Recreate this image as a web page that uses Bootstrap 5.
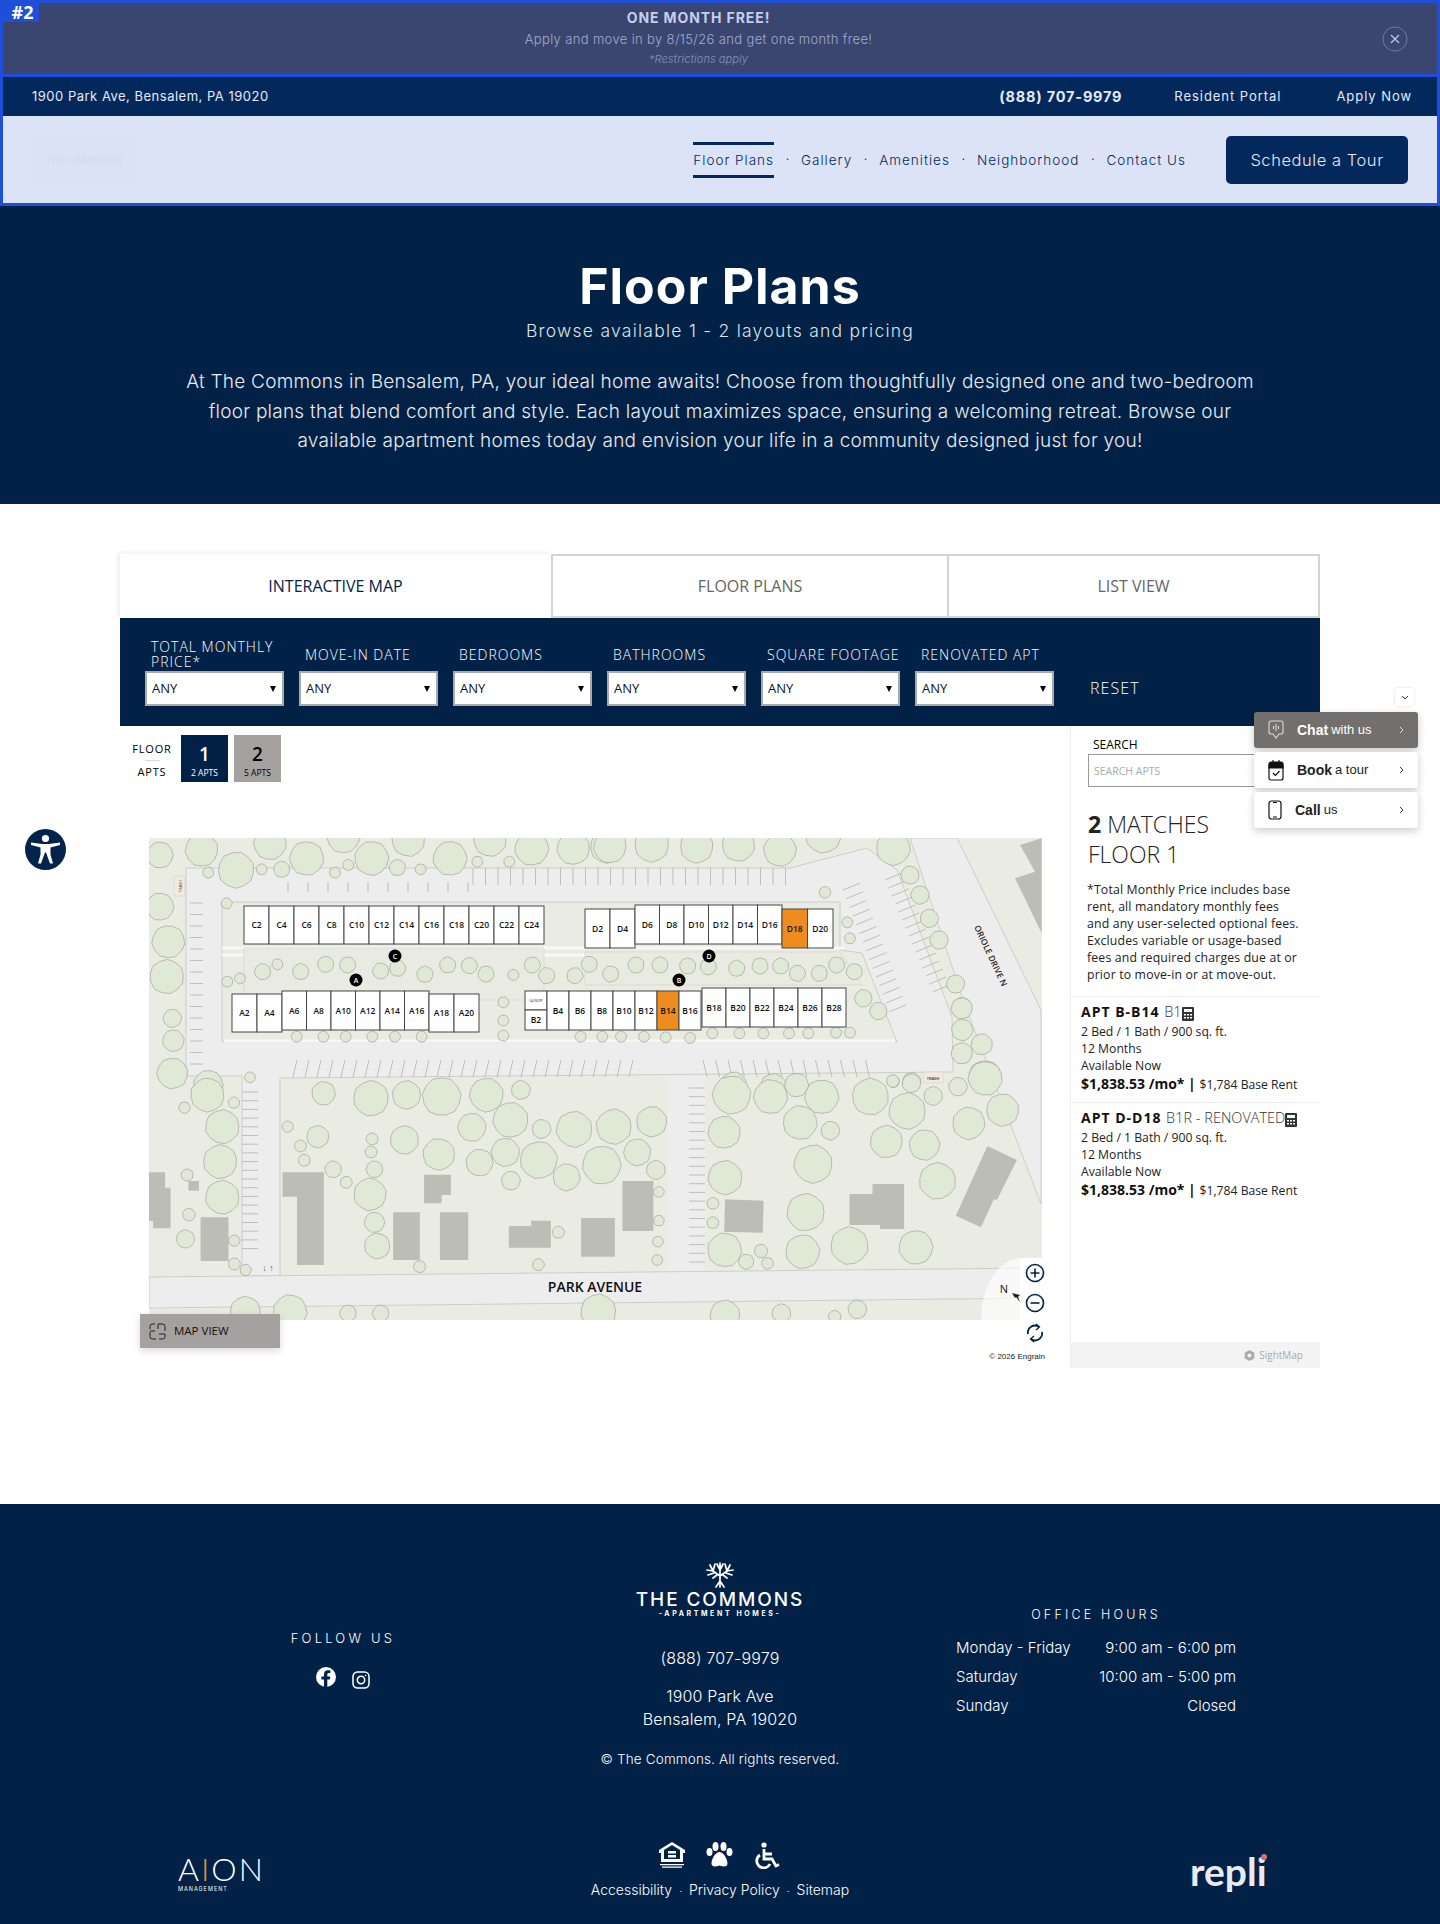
<!DOCTYPE html>
<html lang="en">
<head>
<meta charset="utf-8">
<title>Floor Plans - The Commons</title>
<link href="https://cdn.jsdelivr.net/npm/bootstrap@5.3.3/dist/css/bootstrap.min.css" rel="stylesheet">
<script src="https://cdn.jsdelivr.net/npm/bootstrap@5.3.3/dist/js/bootstrap.bundle.min.js"></script>
<style>
body{font-family:"Inter","Liberation Sans",sans-serif;color:#000;position:relative;height:1924px;overflow-x:hidden}
a{text-decoration:none;color:inherit}
.promo{height:77px;background:#3a4570;border:3px solid #1f4fd8;position:relative;padding-right:43px}
.promo-tag{position:absolute;left:0;top:0;width:36px;height:19px;background:#1f4fd8;color:#fff;font:700 18px/19px "Open Sans",sans-serif;padding-left:3px}
.promo-title{font-size:14px;font-weight:700;color:#c6cfee;letter-spacing:.9px;line-height:18px;margin-top:6px}
.promo-text{font-size:13px;font-weight:300;color:#a3accc;line-height:20px;margin-top:2px;letter-spacing:.36px}
.promo-note{font-size:11px;font-style:italic;color:#7883a8;line-height:16px;margin-top:2px}
.promo-close{position:absolute;right:29px;top:23px;width:26px;height:26px}
.site-head{height:129px;border:3px solid #1f4fd8;border-top:0}
.top-strip{height:39px;background:#03295c;color:#e6eaf6;font-size:13px;padding:0 25px 0 29px}
.top-strip a{letter-spacing:.95px}
.top-addr{letter-spacing:.5px!important}
.top-phone{font-weight:700;font-size:14.5px;letter-spacing:.8px!important;margin-right:52px}
.top-link{margin-right:55px}
.main-bar{height:87px;background:#dde3f7;padding-right:29px;position:relative}
.faint-logo{position:absolute;left:30px;top:20px;width:102px;height:48px;background:#dbe2f6;color:#d4dcf3;font:700 10px/48px "Open Sans",sans-serif;text-align:center}
.main-link{color:#03295c;font-size:13.5px;font-weight:300;letter-spacing:1px;line-height:30px;border-top:3px solid transparent;border-bottom:3px solid transparent;display:block}
.main-link.on{border-color:#03295c}
.main-dot{color:#03295c;font-size:11px;width:27px;text-align:center}
.tour-btn{background:#03295c;color:#e6eaf6;width:182px;height:48px;border-radius:5px;font-size:16.5px;font-weight:300;line-height:48px;text-align:center;margin-left:40px;border:0;padding:0;letter-spacing:.55px}
.tour-btn:hover{background:#03295c;color:#e6eaf6}
.hero{height:298px;background:#012246;color:#fff;padding-top:52px}
.hero h1{font-size:50px;font-weight:700;line-height:56px;margin:0;letter-spacing:1px}
.hero-sub{font-size:17.5px;font-weight:300;letter-spacing:1.25px;line-height:26px;margin:4px 0 0;color:#dfe3ea}
.hero-copy{font-size:19px;font-weight:300;line-height:29.5px;width:1100px;margin:23px auto 0;color:#e8ebf0;letter-spacing:.25px}
.map-sec{height:1000px;padding-top:50px;font-family:"Open Sans",sans-serif}
.map-box{width:1200px;margin-left:120px}
.view-tab{height:64px;line-height:60px;text-align:center;font-size:16px;color:#666;border:2px solid #d4d4d4;border-left-width:0;background:#fff}
.view-tab.on{color:#02234a;border:0;line-height:64px;box-shadow:-2px -1px 5px rgba(0,0,0,.08)}
.filter-bar{height:108px;background:#012246;padding:21px 0 0 25px;color:#fff;gap:15px}
.filter-item{width:139px}
.filter-name{height:30px;padding-left:6px;margin-bottom:2px;font-size:14px;line-height:15px;letter-spacing:1px;font-weight:300}
.filter-pick{height:35px;border:2px solid #aaa;border-radius:0;padding:0 16px 0 5px;font-size:13px;color:#111;background-color:#fff;background-size:6px 6px;background-position:right 6px center;background-image:url("data:image/svg+xml,%3Csvg xmlns='http://www.w3.org/2000/svg' viewBox='0 0 8 8'%3E%3Cpath d='M0 0h8L4 8z'/%3E%3C/svg%3E")}
.reset-txt{color:#fff;font-size:16px;letter-spacing:1.1px;font-weight:300;margin:32px 0 0 21px;line-height:35px}
.map-col{width:950px;position:relative}
.floor-row{padding:9px 0 0 12px;height:112px}
.floor-lab{width:40px;font-size:11px;letter-spacing:.8px;line-height:22px;text-align:center;margin-right:9px;padding-top:3px}
.floor-lab hr{margin:0 auto;width:15px;opacity:.15}
.floor-tile{width:47px;height:47px;text-align:center;margin-right:6px;background:#a5a1a0;color:#000}
.floor-tile.on{background:#012246;color:#fff}
.floor-num{font-size:19px;font-weight:600;line-height:24px;padding-top:7px;display:block}
.floor-apts{font-size:8.5px;line-height:13px;display:block;font-weight:400}
.map-svg{display:block;margin-left:29px}
.map-view{position:absolute;left:20px;top:588px;width:140px;height:34px;background:#a5a1a0;font-size:11.5px;line-height:34px;box-shadow:0 3px 8px rgba(0,0,0,.15);padding-left:9px;color:#111}
.map-tools{position:absolute;left:905px;top:537px;width:25px}
.map-tools svg{display:block;margin-bottom:10px}
.map-copy{position:absolute;right:25px;top:626px;font:8px "Liberation Sans",sans-serif;color:#222}
.side-col{width:250px;height:642px;border-left:1px solid #eee}
.search-box{padding:10px 0 0 17px}
.search-lab{font-size:12px;padding-left:5px;line-height:17px}
.search-in{height:33px;width:218px;border:1px solid #999;border-radius:0;font-size:10.5px;padding:0 5px;margin-top:1px}
.search-in::placeholder{color:#aaa}
.match-head{font-size:23px;font-weight:300;line-height:30px;padding:22px 10px 0 17px;color:#222}
.match-note{font-size:12.3px;line-height:16.9px;padding:13px 6px 13px 16px;letter-spacing:.15px;margin:0;color:#222;white-space:nowrap}
.apt-row{border-top:1px solid #eee;padding:6px 6px 8px 10px;font-size:12.2px;line-height:17px;height:106px;color:#222}
.apt-name{font-size:14px;line-height:18px;font-weight:700;letter-spacing:1px;color:#111;white-space:nowrap;margin-bottom:2px}
.apt-name span{font-weight:300;letter-spacing:0;color:#333;font-size:14.5px}
.apt-price{font-size:14px;font-weight:700;color:#111;line-height:19px;white-space:nowrap}
.apt-price span{font-size:12.2px;font-weight:400;color:#222}
.side-foot{height:26px;background:#f3f3f3;color:#aaa;font-size:10px;padding-right:17px}
.site-foot{height:420px;background:#012246;color:#fff;position:relative}
.foot-block{position:absolute;text-align:center}
.follow-cap{font-size:13px;font-weight:300;letter-spacing:3.2px;line-height:18px}
.logo-big{font-size:19px;letter-spacing:1.9px;line-height:20px;font-weight:500;white-space:nowrap}
.logo-small{font-size:7px;letter-spacing:2.6px;line-height:10px;font-weight:700}
.foot-line{font-size:16px;font-weight:300;line-height:23px;white-space:nowrap;letter-spacing:.15px}
.hours-row{height:29px;font-size:15px;font-weight:300;line-height:29px}
.legal-links{font-size:14px;font-weight:300;white-space:nowrap}
.legal-links i{font-style:normal;padding:0 7px;font-size:10px}
.aion{font-family:"Lato",sans-serif;font-weight:300;font-size:32px;line-height:30px;letter-spacing:2px}
.aion b{color:#e8923a;font-weight:300}
.aion-sub{font-size:5.5px;letter-spacing:1px;line-height:10px}
.repli{font-family:"Lato",sans-serif;font-weight:700;font-size:39px;line-height:46px;color:#e9ebef}
.repli-dot{position:absolute;right:0;top:6px;width:6px;height:6px;border-radius:50%;background:linear-gradient(45deg,#b04fb0,#f08a3c)}
.help-stack{position:absolute;left:1254px;top:688px;width:164px;font-family:"Liberation Sans",sans-serif;font-size:13px}
.help-toggle{width:19px;height:18px;background:#fff;border-radius:3px;margin:0 4px 6px auto;box-shadow:0 0 3px rgba(0,0,0,.15)}
.help-item{height:36px;background:#fff;border-radius:3px;margin-bottom:4px;box-shadow:0 3px 8px rgba(0,0,0,.2);padding:0 14px 0 14px;color:#222}
.help-item.dark{background:#736f6c;color:#fff}
.help-item b{margin:0 3px 0 13px;font-size:14px}
.access-btn{position:absolute;left:25px;top:829px;width:41px;height:41px}
</style>
</head>
<body>
<div class="promo text-center">
  <div class="promo-tag">#2</div>
  <div class="promo-title">ONE MONTH FREE!</div>
  <div class="promo-text">Apply and move in by 8/15/26 and get one month free!</div>
  <div class="promo-note">*Restrictions apply</div>
  <svg class="promo-close" viewBox="0 0 26 26" fill="none" stroke="#c3cbe6"><circle cx="13" cy="13" r="12" stroke="#6f7aa0"/><path d="M9 9l8 8M17 9l-8 8" stroke-width="1.2"/></svg>
</div>
<header class="site-head">
  <div class="top-strip d-flex align-items-center">
    <a href="#" class="me-auto top-addr">1900 Park Ave, Bensalem, PA 19020</a>
    <a href="#" class="top-phone">(888) 707-9979</a>
    <a href="#" class="top-link">Resident Portal</a>
    <a href="#">Apply Now</a>
  </div>
  <nav class="main-bar d-flex align-items-center justify-content-end">
    <div class="faint-logo">THE COMMONS</div>
    <a href="#" class="main-link on">Floor Plans</a><span class="main-dot">·</span>
    <a href="#" class="main-link">Gallery</a><span class="main-dot">·</span>
    <a href="#" class="main-link">Amenities</a><span class="main-dot">·</span>
    <a href="#" class="main-link">Neighborhood</a><span class="main-dot">·</span>
    <a href="#" class="main-link">Contact Us</a>
    <a href="#" class="btn tour-btn">Schedule a Tour</a>
  </nav>
</header>
<section class="hero text-center">
  <h1>Floor Plans</h1>
  <p class="hero-sub">Browse available 1 - 2 layouts and pricing</p>
  <p class="hero-copy">At The Commons in Bensalem, PA, your ideal home awaits! Choose from thoughtfully designed one and two-bedroom floor plans that blend comfort and style. Each layout maximizes space, ensuring a welcoming retreat. Browse our available apartment homes today and envision your life in a community designed just for you!</p>
</section>
<section class="map-sec">
  <div class="map-box">
    <div class="d-flex">
      <a href="#" class="view-tab on" style="width:431px">INTERACTIVE MAP</a>
      <a href="#" class="view-tab" style="width:398px;border-left-width:2px">FLOOR PLANS</a>
      <a href="#" class="view-tab" style="width:371px">LIST VIEW</a>
    </div>
    <div class="filter-bar d-flex" id="filters"></div>
    <div class="d-flex">
      <div class="map-col">
        <div class="floor-row d-flex align-items-start">
          <div class="floor-lab">FLOOR<hr>APTS</div>
          <div class="floor-tile on"><span class="floor-num">1</span><span class="floor-apts">2 APTS</span></div>
          <div class="floor-tile"><span class="floor-num">2</span><span class="floor-apts">5 APTS</span></div>
        </div>
        <svg class="map-svg" id="site-map" width="893" height="482" viewBox="149 838 893 482"></svg>
        <div class="map-view d-flex align-items-center gap-2">
          <svg width="17" height="17" viewBox="0 0 17 17" fill="none" stroke="#222"><path d="M6 1H3.5A2.5 2.5 0 0 0 1 3.500V6M1 9v4.500A2.500 2.500 0 0 0 3.500 16H7M10 16h3.500a2.500 2.500 0 0 0 2.500-2.500V11M16 8V3.500A2.500 2.500 0 0 0 13.500 1H9v5M1 8h5M16 11h-6"/></svg>
          <span>MAP VIEW</span>
        </div>
        <div class="map-tools">
          <svg width="20" height="20" viewBox="0 0 20 20" fill="none" stroke="#02234a" stroke-width="1.600"><circle cx="10" cy="10" r="8.500"/><path d="M10 5.500v9M5.500 10h9"/></svg>
          <svg width="20" height="20" viewBox="0 0 20 20" fill="none" stroke="#02234a" stroke-width="1.600"><circle cx="10" cy="10" r="8.500"/><path d="M5.500 10h9"/></svg>
          <svg width="20" height="20" viewBox="0 0 20 20" fill="none" stroke="#02234a" stroke-width="1.800"><path d="M3 11a7 7 0 0 1 11-7M17 9a7 7 0 0 1-11 7"/><path d="M11 1l3.500 3L11 7M9 13l-3.500 3L9 19" stroke-width="1.300"/></svg>
        </div>
        <div class="map-copy">© 2026 Engrain</div>
      </div>
      <div class="side-col d-flex flex-column">
        <div class="search-box">
          <div class="search-lab">SEARCH</div>
          <input class="form-control search-in" type="text" placeholder="SEARCH APTS">
        </div>
        <div class="match-head"><b class="fw-bold">2</b> MATCHES<br>FLOOR 1</div>
        <p class="match-note">*Total Monthly Price includes base<br>rent, all mandatory monthly fees<br>and any user-selected optional fees.<br>Excludes variable or usage-based<br>fees and required charges due at or<br>prior to move-in or at move-out.</p>
        <div id="apt-list"></div>
        <div class="side-foot mt-auto d-flex align-items-center justify-content-end gap-1">
          <svg width="11" height="11" viewBox="0 0 11 11"><path d="M5.500 0l4.800 2.700v5.600L5.500 11 .7 8.300V2.700z" fill="#aaa"/><circle cx="5.500" cy="5.500" r="2" fill="#f3f3f3"/></svg>SightMap
        </div>
      </div>
    </div>
  </div>
</section>
<footer class="site-foot">
  <div class="foot-block" style="left:243px;top:125px;width:200px">
    <div class="follow-cap">FOLLOW US</div>
    <div class="d-flex justify-content-center gap-3 mt-3 pt-1">
      <svg width="20" height="20" viewBox="0 0 20 20"><circle cx="10" cy="10" r="10" fill="#fff"/><path d="M11.300 20v-7.600h2.500l.5-3h-3V7.600c0-.9.4-1.600 1.700-1.600h1.400V3.400S13.200 3.200 12 3.200c-2.500 0-4 1.500-4 4.100v2.100H5.400v3H8V20z" fill="#012246"/></svg>
      <svg width="18" height="18" viewBox="0 0 18 18" fill="none" stroke="#fff" stroke-width="1.500" class="mt-1"><rect x="1" y="1" width="16" height="16" rx="4.500"/><circle cx="9" cy="9" r="3.700"/><circle cx="13.500" cy="4.500" r=".8" fill="#fff" stroke="none"/></svg>
    </div>
  </div>
  <div class="foot-block" style="left:570px;top:57px;width:300px">
    <svg width="30" height="27" viewBox="0 0 30 27" fill="none" stroke="#fff" stroke-width="1.700" stroke-linecap="round" class="d-block mx-auto"><path d="M15 26v-11M15 15L8 10M15 15l7-5M8 10L2 9M8 10L5 4M8 10l2-7M22 10l6-1M22 10l3-6M22 10l-2-7M15 15V2M15 9l-3-6M15 9l3-6M11 26l4-6 4 6M3 14l6-2M27 14l-6-2M8 17l4-3M22 17l-4-3"/></svg>
    <div class="logo-big" style="margin-top:2px">THE COMMONS</div>
    <div class="logo-small" style="margin-top:-1px">-APARTMENT HOMES-</div>
    <div class="foot-line" style="margin-top:28px">(888) 707-9979</div>
    <div class="foot-line" style="margin-top:15px">1900 Park Ave<br>Bensalem, PA 19020</div>
    <div class="foot-line" style="font-size:13.5px;margin-top:17px">© The Commons. All rights reserved.</div>
  </div>
  <div class="foot-block" style="left:956px;top:102px;width:280px">
    <div class="follow-cap" style="font-size:12.500px;margin-bottom:9px">OFFICE HOURS</div>
    <div class="hours-row d-flex justify-content-between"><span>Monday - Friday</span><span>9:00 am - 6:00 pm</span></div>
    <div class="hours-row d-flex justify-content-between"><span>Saturday</span><span>10:00 am - 5:00 pm</span></div>
    <div class="hours-row d-flex justify-content-between"><span>Sunday</span><span>Closed</span></div>
  </div>
  <div class="foot-block" style="left:178px;top:350px;text-align:left">
    <div class="aion">A<b>I</b>ON</div>
    <div class="aion-sub">MANAGEMENT</div>
  </div>
  <div class="foot-block" style="left:520px;top:338px;width:400px">
    <div class="d-flex justify-content-center align-items-start" style="gap:21px">
      <svg width="26" height="26" viewBox="0 0 26 26" fill="#fff"><path d="M13 0L0 8v3h2v9h22v-9h2V8zM21 17H5V8l8-5 8 5z"/><path d="M9 9h8v2.500H9zM9 13h8v2.500H9zM1 22h24v1.200H1zM3 24.500h20v1.200H3z"/></svg>
      <svg width="27" height="25" viewBox="0 0 27 25" fill="#fff"><ellipse cx="3.500" cy="10" rx="3" ry="4"/><ellipse cx="9.500" cy="4.500" rx="3" ry="4.500"/><ellipse cx="17.500" cy="4.500" rx="3" ry="4.500"/><ellipse cx="23.500" cy="10" rx="3" ry="4"/><path d="M13.500 10c-4 0-8 7-8 11.500 0 3.500 4 3.500 8 2 4 1.500 8 1.500 8-2C21.500 17 17.500 10 13.500 10z"/></svg>
      <svg width="27" height="27" viewBox="0 0 27 27" fill="none" stroke="#fff" stroke-width="2.800"><circle cx="10" cy="3" r="2.600" fill="#fff" stroke="none"/><path d="M10 7v10h8l4 7 3-1.500M10 12h8"/><path d="M6 13a7 7 0 1 0 10 9"/></svg>
    </div>
    <div class="legal-links" style="margin-top:10px"><a href="#">Accessibility</a><i>·</i><a href="#">Privacy Policy</a><i>·</i><a href="#">Sitemap</a></div>
  </div>
  <div class="foot-block repli" style="left:1190px;top:344px">repli<span class="repli-dot"></span></div>
</footer>

<div class="help-stack">
  <div class="help-toggle d-flex align-items-center justify-content-center"><svg width="8" height="5" viewBox="0 0 8 5" fill="none" stroke="#333"><path d="M1 1l3 3 3-3"/></svg></div>
  <div class="help-item dark d-flex align-items-center">
    <svg width="16" height="20" viewBox="0 0 16 20" fill="none" stroke="#ddd" stroke-width="1.100"><path d="M3 1h10a2 2 0 0 1 2 2v9a2 2 0 0 1-2 2h-2l-3 4-3-4H3a2 2 0 0 1-2-2V3a2 2 0 0 1 2-2zM8 4v7M5.500 6v3M10.500 6v3"/></svg>
    <b>Chat</b>with us
    <svg class="ms-auto" width="5" height="8" viewBox="0 0 5 8" fill="none" stroke="#ddd"><path d="M1 1l3 3-3 3"/></svg>
  </div>
  <div class="help-item d-flex align-items-center">
    <svg width="16" height="22" viewBox="0 0 16 22" fill="none" stroke="#111" stroke-width="1.200"><path d="M1 7h14v12a2 2 0 0 1-2 2H3a2 2 0 0 1-2-2z"/><path d="M1 5a2 2 0 0 1 2-2h10a2 2 0 0 1 2 2v4H1z" fill="#111"/><path d="M5 1v3M11 1v3M5 14l2.500 2.500L11.500 12"/></svg>
    <b>Book</b>a tour
    <svg class="ms-auto" width="5" height="8" viewBox="0 0 5 8" fill="none" stroke="#333"><path d="M1 1l3 3-3 3"/></svg>
  </div>
  <div class="help-item d-flex align-items-center">
    <svg width="14" height="20" viewBox="0 0 14 20" fill="none" stroke="#111" stroke-width="1.200"><rect x="1" y="1" width="12" height="18" rx="2.500"/><path d="M5 2.500h4M5 17h4"/></svg>
    <b>Call</b>us
    <svg class="ms-auto" width="5" height="8" viewBox="0 0 5 8" fill="none" stroke="#333"><path d="M1 1l3 3-3 3"/></svg>
  </div>
</div>
<svg class="access-btn" viewBox="0 0 41 41"><circle cx="20.500" cy="20.500" r="20.500" fill="#02234a"/><circle cx="20.500" cy="9.500" r="3.600" fill="#fff"/><path d="M6 13.500L17 15h7l11-1.500V16l-9.500 2.500v7l2.500 9h-3l-4-11h-1l-4 11h-3l2.500-9v-7L6 16z" fill="#fff"/></svg>

<script>
let filterNames=["TOTAL MONTHLY PRICE*","MOVE-IN DATE","BEDROOMS","BATHROOMS","SQUARE FOOTAGE","RENOVATED APT"];
let filterHtml="";
for(let name of filterNames){
  filterHtml+=`<div class="filter-item">
    <div class="filter-name d-flex align-items-center">${name}</div>
    <select class="form-select filter-pick"><option>ANY</option></select>
  </div>`;
}
document.getElementById("filters").innerHTML=filterHtml+`<div class="reset-txt">RESET</div>`;

let calcIcon=`<svg width="12" height="14" viewBox="0 0 12 14"><rect width="12" height="14" rx="1" fill="#333"/><rect x="2" y="2" width="8" height="3" fill="#fff"/><path d="M2 7h2v1.500H2zM5 7h2v1.500H5zM8 7h2v1.500H8zM2 10h2v1.500H2zM5 10h2v1.500H5zM8 10h2v1.500H8z" fill="#fff"/></svg>`;
let apts=[{name:"APT B-B14",plan:"B1"},{name:"APT D-D18",plan:"B1R - RENOVATED"}];
document.getElementById("apt-list").innerHTML=apts.map(a=>`<div class="apt-row">
  <div class="apt-name">${a.name} <span>${a.plan}</span>${calcIcon}</div>
  <div>2 Bed / 1 Bath / 900 sq. ft.</div><div>12 Months</div><div>Available Now</div>
  <div class="apt-price">$1,838.53 /mo* | <span>$1,784 Base Rent</span></div>
</div>`).join("");

// site plan: coordinates read off the crops, so each list keeps its crop origin and scale
function pt(list,ox,oy,sx,sy){return list.map(p=>[p[0]/sx+ox,p[1]/sy+oy,p[2]?p[2]/sx:0]);}
function poly(points,fill,stroke){
  return `<polygon points="${points.map(p=>p[0].toFixed(1)+","+p[1].toFixed(1)).join(" ")}" fill="${fill}" stroke="${stroke||"none"}" stroke-width=".7"/>`;
}
function tree(t){
  let pts=[];
  let sides=t[2]>9?13:10;
  for(let i=0;i<sides;i++){
    let a=i/sides*6.283+t[0];
    let r=t[2]*(i%2?1:.96);
    pts.push([t[0]+Math.cos(a)*r,t[1]+Math.sin(a)*r]);
  }
  return poly(pts,"#e0e9d5","#a3a59c");
}
let z5=[[60,75,40],[185,60,50],[288,120,55],[390,40,50],[500,85,52],[610,20,50],[695,85,52],[805,30,50],[930,85,52],[1050,30,50],[1175,55,52],[1300,55,50],[1400,50,50],[205,128,17],[365,118,17],[425,118,25],[585,128,17],[625,105,17],[772,113,25],[842,118,17],[1012,95,17],[1108,95,17],[60,230,42],[85,335,50],[80,440,52],[97,565,28],[100,632,33],[97,730,47],[260,220,17],[300,445,17],[262,455,17],[368,425,25],[412,403,17],[482,425,25],[557,403,25],[623,405,25],[722,423,25],[773,415,25],[855,433,25],[923,405,25],[988,407,25],[1038,432,25],[1120,435,17],[1177,405,25],[1220,437,25],[1305,437,25],[1348,403,25],[1412,432,25],[1090,517,17],[1090,572,17],[1090,617,17],[470,620,17],[550,620,17],[617,620,17],[697,620,17],[765,620,17],[845,620,17],[205,765,45],[330,742,17]];
let z6=[[150,50,50],[275,45,52],[410,50,50],[535,45,50],[660,60,50],[790,15,55],[1000,55,52],[1050,135,28],[1080,195,28],[1108,265,28],[1137,330,28],[795,187,18],[862,277,17],[870,325,17],[228,405,25],[300,405,25],[383,408,25],[445,410,25],[530,415,25],[600,408,25],[662,408,25],[712,430,25],[778,430,25],[830,405,25],[883,425,25],[62,620,17],[127,620,17],[183,620,17],[252,620,17],[317,622,17],[390,624,17],[457,610,17],[538,610,17],[610,610,17],[687,610,17],[745,610,17],[828,608,17],[870,608,17],[910,505,27],[955,543,27],[1187,462,28],[1207,530,28],[1207,603,28],[1263,643,28],[1207,672,28],[1275,740,50],[520,765,40],[640,770,40],[1000,755,18],[1055,755,28]];
let z7=[[225,15,50],[158,53,17],[302,38,17],[268,110,50],[262,215,50],[268,322,50],[166,255,18],[171,374,19],[161,447,27],[303,452,17],[303,522,18],[336,540,17],[562,10,35],[700,25,52],[803,15,42],[905,20,57],[1035,15,50],[1135,0,28],[1105,90,52],[993,112,42],[1090,187,42],[1187,210,55],[1015,218,40],[1106,272,28],[1268,262,40],[1195,117,28],[1290,118,53],[1405,110,52],[1370,225,57],[1473,187,40],[1515,95,45],[1527,240,28],[458,110,17],[545,140,33],[495,168,18],[506,211,18],[590,238,25],[628,277,18],[703,147,18],[700,186,18],[710,238,25],[697,313,48],[797,150,42],[897,193,47],[710,397,30],[718,468,38],[841,530,18],[1186,524,18],[1244,427,18],[1536,306,16],[1536,392,16],[1533,455,16],[1531,510,16],[335,665,45],[465,665,50],[633,670,25],[728,670,25],[1360,665,52]];
let z8=[[165,285,45],[255,290,40],[315,255,28],[373,290,40],[485,290,43],[537,243,15],[580,250,22],[630,288,22],[570,333,43],[687,260,22],[750,235,40],[790,330,38],[148,397,38],[323,368,40],[393,392,22],[522,425,38],[610,435,36],[712,370,38],[353,492,45],[150,533,40],[640,543,43],[122,610,14],[122,668,14],[149,750,40],[336,637,44],[233,753,16],[199,785,18],[248,790,14],[329,755,40],[437,737,44],[590,742,40],[696,25,25],[697,90,25],[742,133,25],[696,160,25],[150,945,35],[280,940,22],[403,950,15],[455,928,22]];
let trees=[...pt(z5,140,830,3,3),...pt(z6,560,830,3,3),...pt(z7,130,1090,2.904,3),...pt(z8,660,1000,2.306,3)];
let blocks=[
  ...[[[55,247],[102,247],[102,293],[118,293],[118,415],[67,415],[67,393],[55,393]],[[170,273],[200,273],[200,302],[170,302]],[[205,382],[286,382],[286,513],[205,513]],[[443,247],[563,247],[563,525],[485,525],[485,320],[443,320]],[[854,254],[932,254],[932,315],[905,315],[905,340],[854,340]],[[764,367],[842,367],[842,510],[764,510]],[[900,367],[982,367],[982,510],[900,510]],[[1100,408],[1165,408],[1165,392],[1222,392],[1222,473],[1100,473]],[[1310,384],[1408,384],[1408,500],[1310,500]],[[1430,273],[1520,273],[1520,423],[1430,423]]].map(b=>pt(b,130,1090,2.904,3)),
  ...[[[150,598],[239,602],[237,698],[148,695]],[[437,582],[490,582],[490,552],[563,552],[563,687],[507,687],[507,675],[437,675]],[[755,438],[823,480],[777,600],[770,598],[740,682],[682,647]]].map(b=>pt(b,660,1000,2.306,3)),
  pt([[1380,45],[1445,25],[1445,310],[1365,145],[1425,125]],560,830,3,3)
];
let svg=`<rect x="149" y="838" width="893" height="482" fill="#eaece4"/>`;
// roads and lots
let road="#ededed",edge="#c0c2b9";
svg+=poly([[186,868],[790,868],[867,848],[897,870],[952,1017],[953,1072],[280,1078],[280,1276],[242,1276],[242,1076],[186,1076]],road,edge);
svg+=poly([[222,902],[840,902],[840,950],[862,953],[897,1042],[222,1042]],"#eaece4",edge);
svg+=poly([[668,1076],[705,1076],[705,1274],[668,1274]],road);
svg+=poly([[149,1277],[1041,1268],[1041,1298],[149,1308]],road,edge);
svg+=poly([[910,838],[957,838],[1041,1010],[1041,1204],[963,1000]],road,edge);
svg+=`<path d="M222 948H844M222 955H700M224 1041H895" stroke="#f7f7f5" stroke-width="3" fill="none"/>`;
svg+=poly([[244,948],[544,948],[544,1000],[244,1000]],"#e9ebe3","#d3d5cc");
svg+=poly([[585,952],[840,952],[862,985],[585,985]],"#e9ebe3","#d3d5cc");
// parking stripes
let lines="";
function tick(x1,y1,x2,y2){lines+=`M${x1.toFixed(1)} ${y1.toFixed(1)}L${x2.toFixed(1)} ${y2.toFixed(1)}`;}
for(let x=473;x<790;x+=12.5)tick(x,868,x,885);
for(let x=288;x<473;x+=20)tick(x,882,x,892);
for(let y=903;y<1068;y+=11.5)tick(190,y,203,y);
for(let y=1092;y<1256;y+=8.7)tick(242,y,258,y);
for(let y=1088;y<1264;y+=8.7)tick(689,y,705,y);
for(let x=293;x<632;x+=12)tick(x+4,1060,x,1077);
for(let x=703;x<868;x+=12.5)tick(x,1060,x+4,1077);
for(let i=0;i<15;i++){
  tick(843+i*3.3,890+i*8.7,860+i*3.3,883+i*8.7);
  tick(885+i*3.4,880+i*8,902+i*3.4,873+i*8);
}
svg+=`<path d="${lines}" stroke="#a9aba3" stroke-width=".7" fill="none"/>`;
for(let b of blocks)svg+=poly(b,"#bcbdb5");
for(let t of trees)svg+=tree(t);
// apartment units
function unit(x,y,w,h,label,hot){
  return `<rect x="${x}" y="${y}" width="${w}" height="${h}" fill="${hot?"#ef8c1f":"#fff"}" stroke="#444" stroke-width="1"/><text x="${x+w/2}" y="${y+h/2+3}" text-anchor="middle" font-family="Open Sans" font-size="8.5" font-weight="600" fill="#111">${label}</text>`;
}
function unitRow(prefix,start,count,x,y,w,h){
  let out="";
  for(let i=0;i<count;i++){
    let n=start+i*2;
    let name=prefix+n;
    out+=unit(x+i*w,y,w,h,name,name=="B14"||name=="D18");
  }
  return out;
}
svg+=unitRow("C",2,12,244,906,25,38);
svg+=unitRow("D",2,2,585,909,25,39)+unitRow("D",6,6,635,905,24.500,39)+unitRow("D",18,2,782,909,25.500,39);
svg+=unitRow("A",2,2,232,994,25,38)+unitRow("A",6,6,282,991,24.500,39)+unitRow("A",18,2,429,994,25,38);
svg+=unit(525,991,22,19,"")+`<text x="536" y="1002" text-anchor="middle" font-family="Open Sans" font-size="3" fill="#333">LAUNDRY</text>`+unit(525,1010,22,20,"B2");
svg+=unitRow("B",4,7,547,991,22,39)+unitRow("B",18,6,702,988,24,39);
for(let m of [["C",395,956],["A",356,980],["D",709,956],["B",679,980]]){
  svg+=`<circle cx="${m[1]}" cy="${m[2]}" r="6.500" fill="#000"/><text x="${m[1]}" y="${m[2]+2.500}" text-anchor="middle" font-family="Open Sans" font-size="7" font-weight="600" fill="#fff">${m[0]}</text>`;
}
// labels
svg+=`<rect x="174" y="876" width="11" height="20" fill="#f3e9dd" stroke="#ccc" stroke-width=".5"/><text transform="translate(181.500 886) rotate(-90)" text-anchor="middle" font-family="Open Sans" font-size="4" fill="#333">TRASH</text>`;
svg+=`<rect x="923" y="1072" width="20" height="11" fill="#f3e9dd" stroke="#ccc" stroke-width=".5"/><text x="933" y="1079.500" text-anchor="middle" font-family="Open Sans" font-size="4" font-weight="600" fill="#333">TRASH</text>`;
svg+=`<text transform="translate(988 957) rotate(65)" text-anchor="middle" font-family="Open Sans" font-size="8.500" font-weight="600" fill="#222">ORIOLE DRIVE N</text>`;
svg+=`<text x="595" y="1292" text-anchor="middle" font-family="Open Sans" font-size="14" font-weight="600" fill="#111">PARK AVENUE</text>`;
svg+=`<text x="268" y="1271" text-anchor="middle" font-family="Open Sans" font-size="9" fill="#666">↓ ↑</text>`;
// compass corner
svg+=`<path d="M1021 1258H1042V1320H981A40 62 0 0 1 1021 1258z" fill="#fff" fill-opacity=".65"/><rect x="1020" y="1258" width="22" height="62" fill="#fff"/>`;
svg+=`<text x="1004" y="1293" text-anchor="middle" font-family="Open Sans" font-size="11" fill="#111">N</text><path d="M1012 1293l8 2-2 2 2 5-4-5-1 1z" fill="#222"/>`;
document.getElementById("site-map").innerHTML=svg;
</script>
</body>
</html>
